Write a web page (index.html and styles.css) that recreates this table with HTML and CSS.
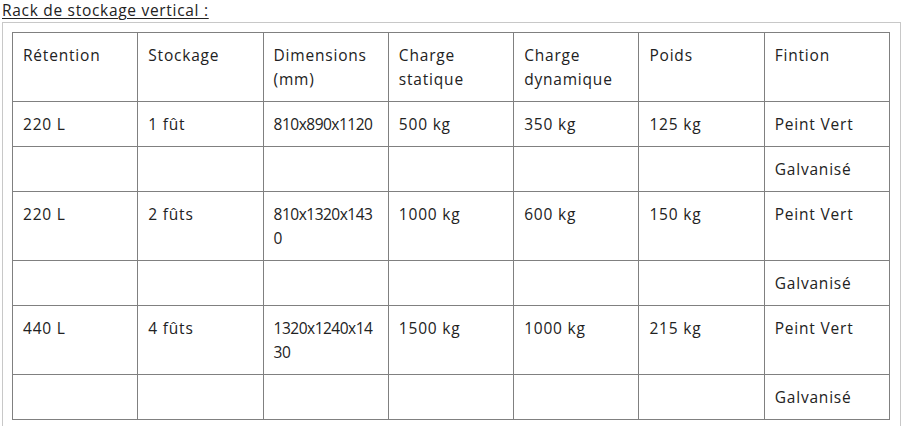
FILE: index.html
```html
<!DOCTYPE html>
<html lang="fr">
<head>
<meta charset="utf-8">
<title>Rack de stockage vertical</title>
<link rel="stylesheet" href="styles.css">
</head>
<body>
<div class="page">
  <p class="title">Rack de stockage vertical :</p>
  <div class="frame">
    <table class="specs">
      <tbody>
        <tr class="tall">
          <td>Rétention</td>
          <td>Stockage</td>
          <td>Dimensions (mm)</td>
          <td>Charge statique</td>
          <td>Charge dynamique</td>
          <td>Poids</td>
          <td>Fintion</td>
        </tr>
        <tr>
          <td>220 L</td>
          <td>1 fût</td>
          <td class="dim">810x890x1120</td>
          <td>500 kg</td>
          <td>350 kg</td>
          <td>125 kg</td>
          <td>Peint Vert</td>
        </tr>
        <tr>
          <td></td><td></td><td></td><td></td><td></td><td></td>
          <td>Galvanisé</td>
        </tr>
        <tr>
          <td>220 L</td>
          <td>2 fûts</td>
          <td class="dim">810x1320x1430</td>
          <td>1000 kg</td>
          <td>600 kg</td>
          <td>150 kg</td>
          <td>Peint Vert</td>
        </tr>
        <tr>
          <td></td><td></td><td></td><td></td><td></td><td></td>
          <td>Galvanisé</td>
        </tr>
        <tr>
          <td>440 L</td>
          <td>4 fûts</td>
          <td class="dim">1320x1240x1430</td>
          <td>1500 kg</td>
          <td>1000 kg</td>
          <td>215 kg</td>
          <td>Peint Vert</td>
        </tr>
        <tr>
          <td></td><td></td><td></td><td></td><td></td><td></td>
          <td>Galvanisé</td>
        </tr>
      </tbody>
    </table>
  </div>
</div>
</body>
</html>
```

FILE: styles.css
```css
html, body {
  margin: 0;
  padding: 0;
  background: #ffffff;
}

body {
  font-family: "Open Sans", "Noto Sans", sans-serif;
  font-size: 15.5px;
  letter-spacing: 0.8px;
  color: #222222;
}

.page {
  padding: 0 3px 0 2px;
}

.title {
  margin: 0;
  height: 22px;
  line-height: 20px;
  letter-spacing: 0.7px;
  text-decoration: underline;
  text-underline-offset: 2px;
  text-decoration-thickness: 1px;
}

.frame {
  border: 1px solid #c8c8c8;
  border-bottom: none;
  padding: 9px 9px 20px 9px;
}

.specs {
  width: 878px;
  table-layout: fixed;
  border-collapse: collapse;
  border: 1px solid #808080;
}

.specs td {
  border: 1px solid #808080;
  padding: 10px;
  height: 24px;
  line-height: 24px;
  vertical-align: top;
}

.specs tr.tall td {
  height: 48px;
}

.specs td.dim {
  letter-spacing: -0.5px;
  overflow-wrap: anywhere;
}
```
